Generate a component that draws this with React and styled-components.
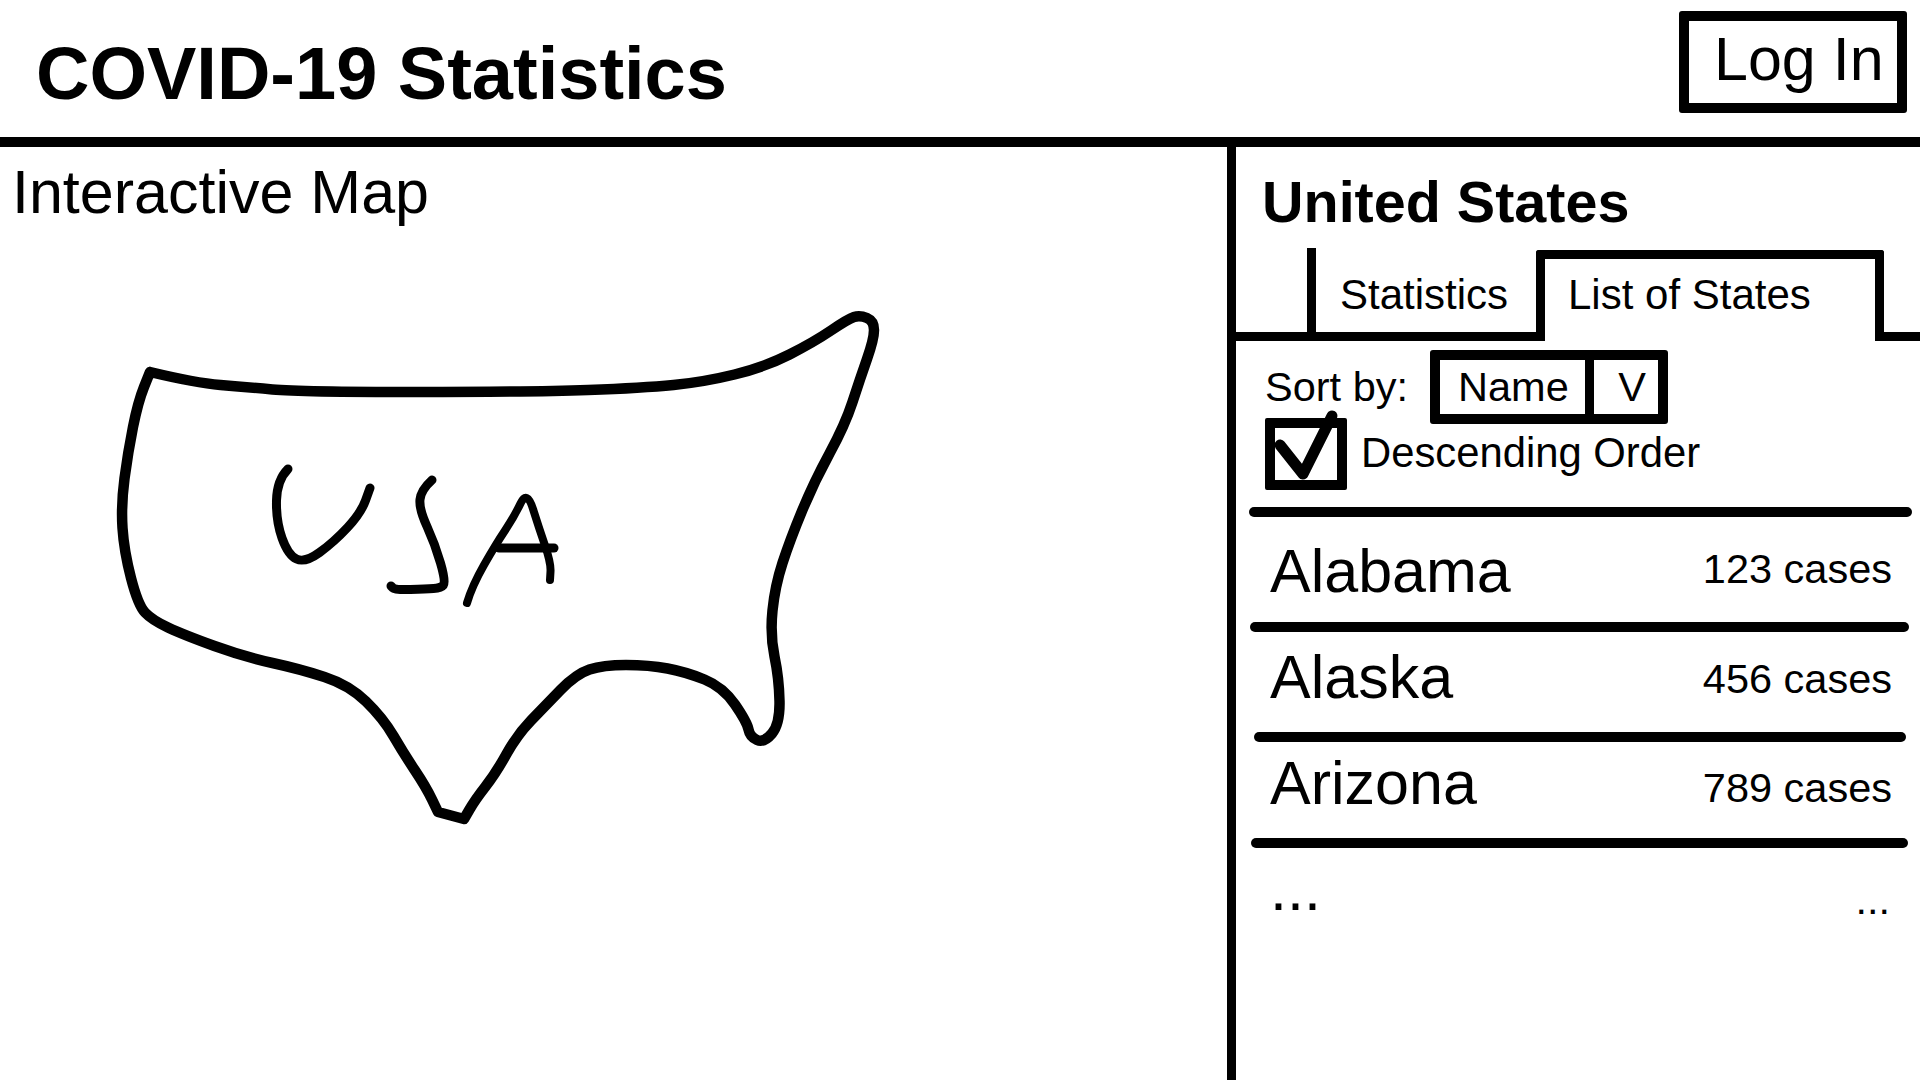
import React from "react";
import styled, { createGlobalStyle } from "styled-components";

const outline = [
  [150, 112], [196, 123], [245, 127], [300, 132], [533, 132], [643, 128], [704, 122], [765, 107],
  [814, 82], [848, 59], [860, 55], [874, 61], [874, 79], [860, 119], [845, 165], [814, 222],
  [790, 280], [775, 326], [770, 375], [779, 418], [780, 464], [764, 483], [750, 477], [747, 462],
  [723, 427], [686, 412], [649, 405], [603, 405], [576, 414], [545, 446], [517, 475], [496, 513],
  [475, 540], [464, 559], [464, 559], [438, 552], [438, 552], [426, 527], [404, 494], [383, 458],
  [349, 425], [300, 409], [245, 397], [184, 375], [152, 360], [138, 345], [124, 291], [121, 245],
  [128, 192], [138, 142], [150, 112],
];
const letterU = [[288, 209], [277, 220], [276, 261], [288, 295], [305, 303], [334, 282], [361, 253], [370, 228]];
const letterS = [[432, 220], [421, 230], [419, 249], [435, 284], [446, 322], [441, 328], [426, 329], [395, 330], [391, 326]];
const letterA = [[467, 343], [472, 326], [496, 284], [514, 257], [527, 230], [539, 268], [551, 303], [550, 320]];

// hand drawn strokes: quadratic curves through the midpoints
const toPath = (points) => {
  let d = `M${points[0][0]} ${points[0][1]}`;
  for (let i = 1; i < points.length - 1; i++) {
    const [x, y] = points[i];
    const [nx, ny] = points[i + 1];
    d += ` Q${x} ${y} ${(x + nx) / 2} ${(y + ny) / 2}`;
  }
  const last = points[points.length - 1];
  return `${d} L${last[0]} ${last[1]}`;
};

const states = [
  { name: "Alabama", cases: "123 cases", height: 105, top: 19, drop: 10, left: 13, right: 8 },
  { name: "Alaska", cases: "456 cases", height: 100, top: 10, drop: 14, left: 14, right: 11 },
  { name: "Arizona", cases: "789 cases", height: 96, top: 6, drop: 17, left: 18, right: 14 },
  { name: "...", cases: "...", height: 232, top: 6, drop: 23, left: 15, right: 12, end: 30 },
];

function App() {
  return (
    <Page>
      <GlobalStyle />
      <Header>
        <Title>COVID-19 Statistics</Title>
        <LoginButton>Log In</LoginButton>
      </Header>
      <Main>
        <MapPane>
          <MapTitle>Interactive Map</MapTitle>
          <MapDrawing viewBox="0 0 960 600" fill="none" stroke="#000" strokeLinecap="round" strokeLinejoin="round">
            <path d={toPath(outline)} strokeWidth="10.5" />
            <path d={toPath(letterU)} strokeWidth="9" />
            <path d={toPath(letterS)} strokeWidth="9" />
            <path d={toPath(letterA)} strokeWidth="8" />
            <path d="M499 288 L554 288" strokeWidth="9" />
          </MapDrawing>
        </MapPane>
        <SidePane>
          <CountryName>United States</CountryName>
          <TabBar>
            <TabGap $width={71} />
            <Tab>Statistics</Tab>
            <ActiveTab>List of States</ActiveTab>
            <TabGap />
          </TabBar>
          <Controls>
            <SortRow>
              <SortLabel>Sort by:</SortLabel>
              <Select>
                <SelectValue>Name</SelectValue>
                <SelectArrow>V</SelectArrow>
              </Select>
            </SortRow>
            <CheckRow>
              <CheckBox>
                <CheckMark viewBox="0 0 82 82" fill="none" stroke="#000" strokeWidth="11" strokeLinecap="round" strokeLinejoin="round">
                  <path d="M15 33 L38 62 L67 4" />
                </CheckMark>
              </CheckBox>
              <CheckLabel>Descending Order</CheckLabel>
            </CheckRow>
          </Controls>
          {states.map((state, i) => (
            <div key={i}>
              <Rule $left={state.left} $right={state.right} />
              <StateRow $height={state.height} $top={state.top} $end={state.end}>
                <StateName>{state.name}</StateName>
                <StateCases $drop={state.drop}>{state.cases}</StateCases>
              </StateRow>
            </div>
          ))}
        </SidePane>
      </Main>
    </Page>
  );
}

const GlobalStyle = createGlobalStyle`
  html, body {
    margin: 0;
    padding: 0;
    background: #fff;
  }
  * {
    box-sizing: border-box;
  }
`;

const Page = styled.div`
  display: flex;
  flex-direction: column;
  width: 1920px;
  height: 1080px;
  overflow: hidden;
  background: #fff;
  color: #000;
  font-family: "Liberation Sans", Arial, sans-serif;
`;

const Header = styled.header`
  display: flex;
  justify-content: space-between;
  align-items: flex-start;
  height: 147px;
  padding: 0 13px 0 36px;
  border-bottom: 10px solid #000;
`;

const Title = styled.h1`
  margin: 31px 0 0;
  font-size: 74px;
  line-height: 85px;
  font-weight: 700;
`;

const LoginButton = styled.button`
  width: 228px;
  height: 102px;
  margin-top: 11px;
  padding: 0 0 6px 25px;
  background: #fff;
  border: 10px solid #000;
  border-radius: 3px;
  color: #000;
  font-family: inherit;
  font-size: 61px;
  text-align: left;
`;

const Main = styled.main`
  display: flex;
  flex: 1;
  min-height: 0;
`;

const MapPane = styled.section`
  width: 1227px;
  padding-top: 10px;
`;

const MapTitle = styled.h2`
  margin: 0 0 33px 12px;
  font-size: 61px;
  line-height: 70px;
  font-weight: 400;
`;

const MapDrawing = styled.svg`
  display: block;
  width: 960px;
  height: 600px;
`;

const SidePane = styled.aside`
  flex: 1;
  padding-top: 23px;
  border-left: 9px solid #000;
`;

const CountryName = styled.h2`
  margin: 0 0 14px 26px;
  font-size: 57.5px;
  line-height: 64px;
  font-weight: 700;
`;

const TabBar = styled.div`
  display: flex;
  align-items: flex-end;
  height: 93px;
`;

const TabGap = styled.div`
  flex: ${(p) => (p.$width ? `0 0 ${p.$width}px` : "1")};
  height: 9px;
  background: #000;
`;

const Tab = styled.div`
  width: 229px;
  height: 93px;
  padding: 23px 0 0 24px;
  border-left: 9px solid #000;
  border-bottom: 9px solid #000;
  font-size: 42px;
  line-height: 47px;
`;

const ActiveTab = styled.div`
  width: 348px;
  height: 91px;
  padding: 12px 0 0 23px;
  border: 9px solid #000;
  border-bottom: none;
  border-radius: 3px 3px 0 0;
  font-size: 42px;
  line-height: 47px;
`;

const Controls = styled.div`
  padding: 9px 0 17px 29px;
`;

const SortRow = styled.div`
  display: flex;
  align-items: center;
  gap: 22px;
`;

const SortLabel = styled.span`
  margin-top: -2px;
  font-size: 41.5px;
  line-height: 47px;
`;

const Select = styled.div`
  display: flex;
  width: 238px;
  height: 74px;
  border: 10px solid #000;
  border-radius: 3px;
  font-size: 41.5px;
  line-height: 54px;
`;

const SelectValue = styled.div`
  width: 154px;
  padding-left: 18px;
  border-right: 9px solid #000;
`;

const SelectArrow = styled.div`
  flex: 1;
  padding-left: 12px;
  text-align: center;
`;

const CheckRow = styled.div`
  display: flex;
  align-items: center;
  gap: 14px;
  margin-top: -6px;
`;

const CheckBox = styled.div`
  position: relative;
  width: 82px;
  height: 72px;
  border: 10px solid #000;
  border-radius: 2px;
`;

const CheckMark = styled.svg`
  position: absolute;
  top: -16px;
  left: -10px;
  width: 82px;
  height: 82px;
  overflow: visible;
`;

const CheckLabel = styled.span`
  margin-top: -3px;
  font-size: 41.8px;
  line-height: 48px;
`;

const Rule = styled.div`
  height: 10px;
  margin: 0 ${(p) => p.$right}px 0 ${(p) => p.$left}px;
  background: #000;
  border-radius: 5px;
`;

const StateRow = styled.div`
  display: flex;
  justify-content: space-between;
  align-items: flex-start;
  height: ${(p) => p.$height}px;
  padding: ${(p) => p.$top}px ${(p) => p.$end || 28}px 0 34px;
`;

const StateName = styled.span`
  font-size: 61px;
  line-height: 70px;
`;

const StateCases = styled.span`
  margin-top: ${(p) => p.$drop}px;
  font-size: 41.5px;
  line-height: 46px;
`;

export default App;
